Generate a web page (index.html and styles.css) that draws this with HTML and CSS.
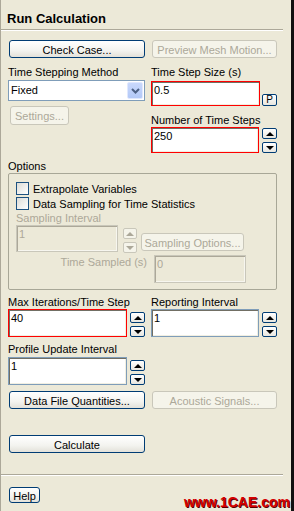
FILE: index.html
```html
<!DOCTYPE html>
<html lang="en">
<head>
    <meta charset="UTF-8">
    <meta name="viewport" content="width=device-width, initial-scale=1.0">
    <title>Run Calculation</title>
    <link rel="stylesheet" href="styles.css">
</head>
<body>
    <div class="panel">
        <div class="header">
            <h1>Run Calculation</h1>
        </div>
        <div class="separator"></div>

        <div class="content">
            <div class="grid row-top">
                <button class="button wide">Check Case...</button>
                <button class="button wide" disabled>Preview Mesh Motion...</button>
            </div>

            <div class="grid">
                <div class="col">
                    <div class="label">Time Stepping Method</div>
                    <div class="select">
                        <span class="select-value">Fixed</span>
                        <span class="select-arrow">
                            <svg width="9" height="6" viewBox="0 0 9 6"><path d="M1 1 L4.5 4.5 L8 1" fill="none" stroke="#4d6185" stroke-width="2"/></svg>
                        </span>
                    </div>
                    <button class="button settings" disabled>Settings...</button>
                </div>
                <div class="col">
                    <div class="label">Time Step Size (s)</div>
                    <div class="field-row step-size">
                        <div class="input marked">0.5</div>
                        <button class="p-button">P</button>
                    </div>
                    <div class="label gap-top">Number of Time Steps</div>
                    <div class="field-row steps">
                        <div class="input marked">250</div>
                        <div class="spinner">
                            <span class="spin up"></span>
                            <span class="spin down"></span>
                        </div>
                    </div>
                </div>
            </div>

            <div class="label options-label">Options</div>
            <div class="group">
                <div class="check-row"><span class="checkbox"></span>Extrapolate Variables</div>
                <div class="check-row"><span class="checkbox"></span>Data Sampling for Time Statistics</div>
                <div class="label disabled sampling-label">Sampling Interval</div>
                <div class="sampling-row">
                    <div class="input off sampling-input">1</div>
                    <div class="spinner off">
                        <span class="spin up"></span>
                        <span class="spin down"></span>
                    </div>
                    <button class="button sampling-button" disabled>Sampling Options...</button>
                </div>
                <div class="sampled-row">
                    <div class="label disabled sampled-label">Time Sampled (s)</div>
                    <div class="input off sampled-input">0</div>
                </div>
            </div>

            <div class="grid iter-row">
                <div class="col">
                    <div class="label">Max Iterations/Time Step</div>
                    <div class="field-row tall">
                        <div class="input marked">40</div>
                        <div class="spinner">
                            <span class="spin up"></span>
                            <span class="spin down"></span>
                        </div>
                    </div>
                </div>
                <div class="col">
                    <div class="label">Reporting Interval</div>
                    <div class="field-row tall">
                        <div class="input">1</div>
                        <div class="spinner">
                            <span class="spin up"></span>
                            <span class="spin down"></span>
                        </div>
                    </div>
                </div>
            </div>

            <div class="grid profile-row">
                <div class="col">
                    <div class="label">Profile Update Interval</div>
                    <div class="field-row tall">
                        <div class="input">1</div>
                        <div class="spinner">
                            <span class="spin up"></span>
                            <span class="spin down"></span>
                        </div>
                    </div>
                </div>
            </div>

            <div class="grid row-data">
                <button class="button wide">Data File Quantities...</button>
                <button class="button wide" disabled>Acoustic Signals...</button>
            </div>

            <div class="grid row-calc">
                <button class="button wide">Calculate</button>
            </div>
        </div>

        <div class="separator bottom"></div>

        <div class="footer">
            <button class="button help">Help</button>
        </div>

        <div class="watermark">www.1CAE.com</div>
    </div>
</body>
</html>
```

FILE: styles.css
```css
* {
    margin: 0;
    padding: 0;
    box-sizing: border-box;
}

body {
    font-family: 'Liberation Sans', Arial, sans-serif;
    font-size: 11px;
    line-height: 12px;
    color: #000;
    background-color: #ece9d8;
}

.panel {
    position: relative;
    width: 294px;
    height: 511px;
    background-color: #ece9d8;
    border-left: 1px solid #aca899;
    border-right: 3px solid #111;
}

.header {
    height: 29px;
    padding: 11px 0 0 6px;
}

.header h1 {
    font-size: 13px;
    line-height: 16px;
    font-weight: bold;
}

.separator {
    width: 282px;
    height: 2px;
    border-top: 1px solid #aca899;
    border-bottom: 1px solid #fff;
}

.content {
    padding-left: 7px;
}

.grid {
    display: grid;
    grid-template-columns: 137px 126px;
    column-gap: 6px;
    align-items: start;
}

.col {
    display: flex;
    flex-direction: column;
}

.label {
    height: 12px;
    white-space: nowrap;
}

.label.disabled {
    color: #aca899;
}

.row-top {
    margin-top: 9px;
}

.col > .label:first-child {
    margin-top: 8px;
}

.gap-top {
    margin-top: 8px;
}

/* buttons */
.button {
    display: block;
    font-family: inherit;
    font-size: 11px;
    line-height: 14px;
    height: 18px;
    padding-top: 1px;
    color: #000;
    text-align: center;
    white-space: nowrap;
    border: 1px solid #003c74;
    border-radius: 3px;
    background: linear-gradient(#ffffff, #f3f3ef 60%, #e3e1d9);
}

.button:disabled {
    color: #aca899;
    border-color: #c9c7ba;
    background: #f5f4ea;
}

.wide {
    margin-left: 1px;
}

.grid > .wide:first-child {
    width: 136px;
}

.grid > .wide:nth-child(2) {
    width: 125px;
}

.settings {
    width: 59px;
    height: 19px;
    margin: 5px 0 0 2px;
}

.sampling-button {
    width: 103px;
    margin: 8px 0 0 4px;
}

.help {
    width: 31px;
    height: 16px;
    line-height: 12px;
    margin-left: 8px;
}

.p-button {
    width: 15px;
    height: 12px;
    margin-left: 2px;
    font-family: inherit;
    font-size: 10px;
    line-height: 10px;
    text-align: center;
    border: 1px solid #003c74;
    border-radius: 2px;
    background: linear-gradient(#ffffff, #e8e6df);
}

/* dropdown */
.select {
    display: flex;
    justify-content: space-between;
    height: 21px;
    margin-top: 2px;
    border: 1px solid #7f9db9;
    background-color: #fff;
}

.select-value {
    padding: 3px 0 0 2px;
}

.select-arrow {
    display: flex;
    align-items: center;
    justify-content: center;
    width: 16px;
    margin: 1px;
    border: 1px solid #e0e8fe;
    border-radius: 2px;
    background: linear-gradient(#c9d8fc, #b3c9f7);
}

/* inputs */
.field-row {
    display: flex;
    align-items: flex-end;
}

.step-size {
    margin-top: 3px;
    height: 25px;
}

.steps {
    margin-top: 1px;
    height: 26px;
}

.tall {
    height: 28px;
    margin-top: 1px;
}

.input {
    flex: 1;
    height: 100%;
    padding: 2px 0 0 2px;
    background-color: #fff;
    border: 1px solid #7f9db9;
    box-shadow: inset 1px 1px 0 #716f64, inset -1px -1px 0 #f1efe2;
}

.input.marked {
    border-color: #f00;
}

.input.off {
    flex: none;
    color: #aca899;
    background-color: #ece9d8;
    border-color: #c9c7ba;
    box-shadow: inset 1px 1px 0 #aca899, inset -1px -1px 0 #f7f6ef;
}

.spinner {
    display: flex;
    flex-direction: column;
    gap: 3px;
    margin-left: 3px;
}

.spin {
    display: flex;
    align-items: center;
    justify-content: center;
    width: 15px;
    height: 11px;
    border: 1px solid #003c74;
    border-radius: 2px;
    background: linear-gradient(#ffffff, #e8e6df);
}

.spin::after {
    content: "";
    border-left: 4px solid transparent;
    border-right: 4px solid transparent;
}

.spin.up::after {
    border-bottom: 4px solid #000;
}

.spin.down::after {
    border-top: 4px solid #000;
}

.spinner.off {
    margin: 3px 0 0 5px;
}

.spinner.off .spin {
    width: 14px;
    border-color: #c9c7ba;
    background: #f5f4ea;
}

.spinner.off .spin.up::after {
    border-bottom-color: #aca899;
}

.spinner.off .spin.down::after {
    border-top-color: #aca899;
}

/* options group */
.options-label {
    margin-top: 7px;
}

.group {
    width: 269px;
    height: 117px;
    margin-top: 1px;
    padding: 7px 0 0 7px;
    border: 1px solid #a8a797;
    border-radius: 2px;
}

.check-row {
    display: flex;
    align-items: center;
    gap: 4px;
    height: 15px;
}

.checkbox {
    width: 13px;
    height: 13px;
    border: 1px solid #1c5180;
    background: linear-gradient(135deg, #dcdcd7, #ffffff);
}

.sampling-label {
    margin-top: 1px;
}

.sampling-row {
    display: flex;
    align-items: flex-start;
    margin-top: 1px;
    height: 27px;
}

.sampling-input {
    width: 102px;
    height: 27px;
}

.sampled-row {
    display: flex;
    margin-top: 3px;
}

.sampled-label {
    width: 131px;
    margin-top: 1px;
    text-align: right;
}

.sampled-input {
    width: 92px;
    height: 28px;
    margin-left: 7px;
}

/* lower rows */
.iter-row {
    margin-top: 6px;
}

.iter-row .col > .label:first-child,
.profile-row .col > .label:first-child {
    margin-top: 0;
}

.profile-row {
    margin-top: 6px;
}

.profile-row .tall {
    margin-top: 2px;
}

.row-data {
    margin-top: 6px;
}

.row-calc {
    margin-top: 26px;
}

.separator.bottom {
    margin-top: 21px;
}

.footer {
    padding-top: 11px;
}

.watermark {
    position: absolute;
    right: 1px;
    bottom: 2px;
    font-size: 14px;
    line-height: 14px;
    font-weight: bold;
    color: #d40000;
    text-shadow: 1px 1px 0 #5a0000;
}
```
